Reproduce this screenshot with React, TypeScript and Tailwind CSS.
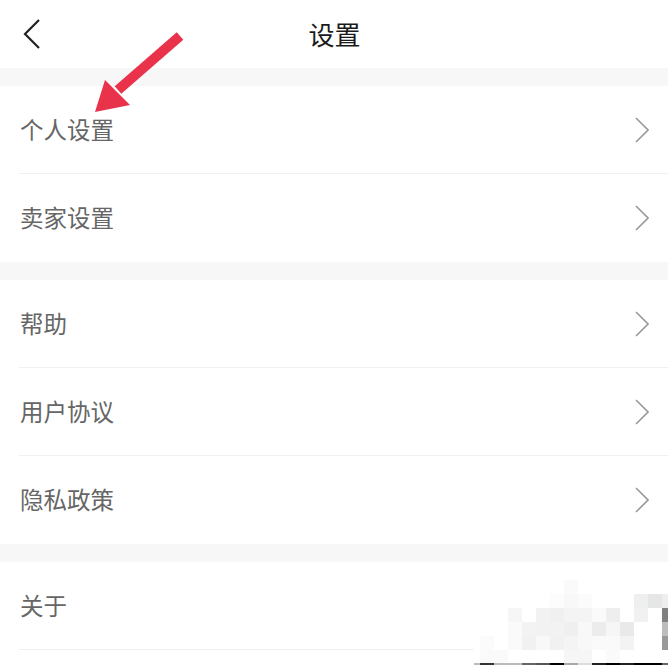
import React from "react";

const font = { fontFamily: '"Noto Sans CJK SC", "Noto Sans", sans-serif' };

function Chevron() {
  return (
    <svg width="14" height="26" viewBox="0 0 14 26" className="shrink-0">
      <polyline points="1,1 13,13 1,25" fill="none" stroke="#9a9a9a" strokeWidth="1.6" />
    </svg>
  );
}

function Row({ label, last }: { label: string; last?: boolean }) {
  return (
    <div className="bg-white pl-[19px]">
      <div className={"flex h-[88px] items-center justify-between pr-[19px] " + (last ? "" : "border-b border-[#f0f0f0]")}>
        <span className="pl-px text-[23.5px] leading-none text-[#666666]">{label}</span>
        <Chevron />
      </div>
    </div>
  );
}

const N = "";
const mosaic: string[][] = [
  [N, N, N, N, N, N, N, N, N, N, N, N, N, N, N],
  [N, N, N, N, N, N, N, "bg-[#fafafa]", N, N, N, N, N, N, N],
  [N, N, N, N, N, N, "bg-[#fcfcfc]", "bg-[#f8f8f8]", "bg-[#fbfbfb]", N, N, N, "bg-[#efefef]", "bg-[#e5e6e6]", "bg-[#eeeeee]"],
  [N, N, N, "bg-[#f6f6f6]", N, "bg-[#f2f2f2]", "bg-[#f0f0f0]", "bg-[#f4f4f4]", "bg-[#f4f4f4]", "bg-[#fafafa]", "bg-[#eeeeee]", N, "bg-[#f1f1f1]", N, "bg-[#808080]"],
  [N, N, N, "bg-[#fafafa]", "bg-[#f3f3f3]", "bg-[#f2f2f2]", "bg-[#f2f2f2]", "bg-[#efefef]", "bg-[#f8f8f8]", "bg-[#ececec]", "bg-[#f6f6f6]", "bg-[#e9e9e9]", N, N, "bg-[#bcbcbc]"],
  [N, "bg-[#fbfbfb]", N, "bg-[#fafafa]", "bg-[#f1f1f1]", "bg-[#f8f8f8]", "bg-[#f1f1f1]", "bg-[#f4f4f4]", "bg-[#f8f8f8]", "bg-[#fafafa]", "bg-[#fafafa]", "bg-[#f3f3f3]", N, N, "bg-[#999999]"],
  [N, "bg-[#fafafa]", "bg-[#fafafa]", N, N, N, N, "bg-[#f6f6f6]", "bg-[#f6f6f6]", N, "bg-[#fafafa]", N, N, N, N],
  ["bg-[#bbbbbb]", "bg-[#333333]", "bg-[#bbbbbb]", "bg-[#bbbbbb]", "bg-[#666666]", "bg-[#555555]", "bg-[#000000]", "bg-[#aaaaaa]", "bg-[#dddddd]", "bg-[#222222]", "bg-[#000000]", "bg-[#222222]", "bg-[#000000]", "bg-[#000000]", "bg-[#666666]"],
];

export default function App() {
  return (
    <div className="relative h-[665px] w-[668px] overflow-hidden bg-[#f7f7f7]" style={font}>
      {/* header */}
      <div className="relative flex h-[68px] items-center justify-center bg-white">
        <svg width="20" height="32" viewBox="0 0 20 32" className="absolute left-[22px] top-[18px]">
          <polyline points="17,2 3,16 17,30" fill="none" stroke="#222222" strokeWidth="2.2" />
        </svg>
        <span className="pl-[1px] text-[26px] leading-none text-[#1a1a1a]">设置</span>
      </div>

      <div className="flex flex-col gap-[18px] pt-[18px]">
        <div>
          <Row label="个人设置" />
          <Row label="卖家设置" last />
        </div>
        <div>
          <Row label="帮助" />
          <Row label="用户协议" />
          <Row label="隐私政策" last />
        </div>
        <div className="bg-white pl-[19px]">
          <div className="flex h-[88px] items-center border-b border-[#f0f0f0]">
            <span className="pl-px text-[23.5px] leading-none text-[#666666]">关于</span>
          </div>
          <div className="h-[20px]" />
        </div>
      </div>

      {/* red arrow annotation */}
      <svg width="668" height="140" viewBox="0 0 668 140" className="pointer-events-none absolute left-0 top-0">
        <line x1="180" y1="36" x2="118" y2="90" stroke="#e8334a" strokeWidth="10" strokeLinecap="butt" />
        <polygon points="95,112 105,80 130,105" fill="#e8334a" />
      </svg>

      {/* pixelated watermark */}
      <div className="absolute left-[474px] top-[566px] grid grid-cols-[6px_repeat(13,14px)_6px] grid-rows-[14px_14px_14px_14px_14px_14px_13px_2px] bg-white">
        {mosaic.map((row, r) =>
          row.map((c, i) => <div key={r + "-" + i} className={c} />)
        )}
      </div>
    </div>
  );
}
